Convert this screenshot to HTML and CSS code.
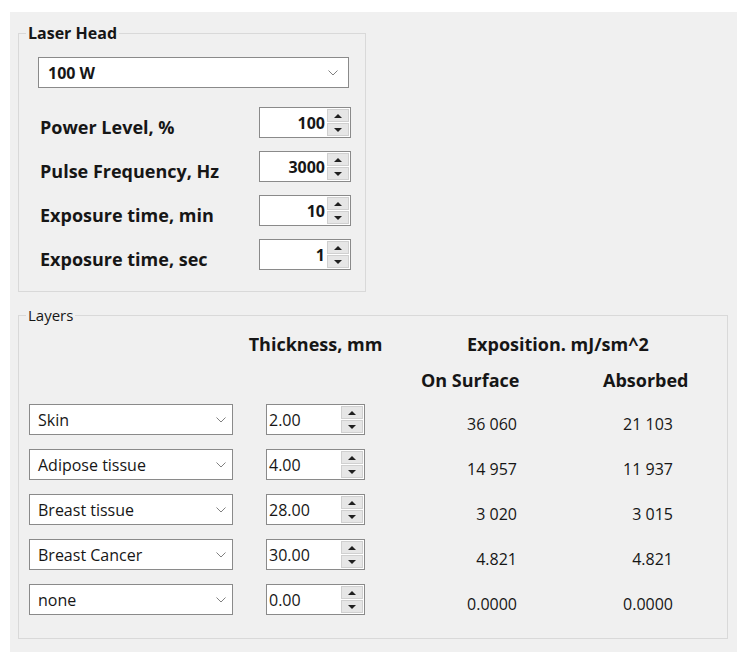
FILE: index.html
```html
<!DOCTYPE html>
<html lang="en">
<head>
    <meta charset="UTF-8">
    <title>Laser Exposure</title>
    <link rel="stylesheet" href="styles.css">
</head>
<body>
<div class="panel">
    <!-- Laser head settings -->
    <fieldset class="group laser">
        <legend>Laser Head</legend>
        <div class="laser-body">
            <div class="combo combo-head">
                <span class="combo-text">100 W</span>
                <svg class="chev" width="10" height="6" viewBox="0 0 10 6"><polyline points="0.5,0.5 5,5 9.5,0.5" fill="none" stroke="#808080" stroke-width="1"/></svg>
            </div>
            <div class="param-list">
                <div class="param">
                    <span class="param-label">Power Level, %</span>
                    <div class="spin spin-head"><span class="spin-value">100</span><div class="spin-btns"><span class="btn up"></span><span class="btn down"></span></div></div>
                </div>
                <div class="param">
                    <span class="param-label">Pulse Frequency, Hz</span>
                    <div class="spin spin-head"><span class="spin-value">3000</span><div class="spin-btns"><span class="btn up"></span><span class="btn down"></span></div></div>
                </div>
                <div class="param">
                    <span class="param-label">Exposure time, min</span>
                    <div class="spin spin-head"><span class="spin-value">10</span><div class="spin-btns"><span class="btn up"></span><span class="btn down"></span></div></div>
                </div>
                <div class="param">
                    <span class="param-label">Exposure time, sec</span>
                    <div class="spin spin-head"><span class="spin-value">1</span><div class="spin-btns"><span class="btn up"></span><span class="btn down"></span></div></div>
                </div>
            </div>
        </div>
    </fieldset>

    <!-- Tissue layers -->
    <fieldset class="group layers">
        <legend>Layers</legend>
        <div class="layer-head">
            <div></div>
            <div class="head head-thick"><span>Thickness, mm</span></div>
            <div class="head head-expo">Exposition. mJ/sm^2</div>
            <div></div>
            <div></div>
            <div class="head">On Surface</div>
            <div class="head">Absorbed</div>
        </div>
        <div class="layer-rows">
            <div class="combo combo-layer"><span class="combo-text">Skin</span><svg class="chev" width="10" height="6" viewBox="0 0 10 6"><polyline points="0.5,0.5 5,5 9.5,0.5" fill="none" stroke="#808080" stroke-width="1"/></svg></div>
            <div class="spin spin-layer"><span class="spin-value">2.00</span><div class="spin-btns"><span class="btn up"></span><span class="btn down"></span></div></div>
            <div class="val val-surf">36 060</div>
            <div class="val val-abs">21 103</div>

            <div class="combo combo-layer"><span class="combo-text">Adipose tissue</span><svg class="chev" width="10" height="6" viewBox="0 0 10 6"><polyline points="0.5,0.5 5,5 9.5,0.5" fill="none" stroke="#808080" stroke-width="1"/></svg></div>
            <div class="spin spin-layer"><span class="spin-value">4.00</span><div class="spin-btns"><span class="btn up"></span><span class="btn down"></span></div></div>
            <div class="val val-surf">14 957</div>
            <div class="val val-abs">11 937</div>

            <div class="combo combo-layer"><span class="combo-text">Breast tissue</span><svg class="chev" width="10" height="6" viewBox="0 0 10 6"><polyline points="0.5,0.5 5,5 9.5,0.5" fill="none" stroke="#808080" stroke-width="1"/></svg></div>
            <div class="spin spin-layer"><span class="spin-value">28.00</span><div class="spin-btns"><span class="btn up"></span><span class="btn down"></span></div></div>
            <div class="val val-surf">3 020</div>
            <div class="val val-abs">3 015</div>

            <div class="combo combo-layer"><span class="combo-text">Breast Cancer</span><svg class="chev" width="10" height="6" viewBox="0 0 10 6"><polyline points="0.5,0.5 5,5 9.5,0.5" fill="none" stroke="#808080" stroke-width="1"/></svg></div>
            <div class="spin spin-layer"><span class="spin-value">30.00</span><div class="spin-btns"><span class="btn up"></span><span class="btn down"></span></div></div>
            <div class="val val-surf">4.821</div>
            <div class="val val-abs">4.821</div>

            <div class="combo combo-layer"><span class="combo-text">none</span><svg class="chev" width="10" height="6" viewBox="0 0 10 6"><polyline points="0.5,0.5 5,5 9.5,0.5" fill="none" stroke="#808080" stroke-width="1"/></svg></div>
            <div class="spin spin-layer"><span class="spin-value">0.00</span><div class="spin-btns"><span class="btn up"></span><span class="btn down"></span></div></div>
            <div class="val val-surf">0.0000</div>
            <div class="val val-abs">0.0000</div>
        </div>
    </fieldset>
</div>
</body>
</html>
```

FILE: styles.css
```css
* {
    margin: 0;
    padding: 0;
    box-sizing: border-box;
}
body {
    background: #ffffff;
    font-family: 'Open Sans', 'Noto Sans', sans-serif;
    color: #161616;
}
.panel {
    margin: 12px 0 0 10px;
    width: 727px;
    height: 640px;
    background: #f0f0f0;
    padding: 12px 8px 0 8px;
}
.group {
    border: 1px solid #d9d9d9;
    padding: 0 14px 21px 7px;
}
.group legend {
    padding: 0 2px;
    font-size: 15px;
    line-height: 18px;
}
.laser {
    width: 348px;
}
.laser legend {
    font-weight: 700;
    font-size: 16px;
}
.laser-body {
    padding: 15px 0 0 12px;
}
.combo {
    display: flex;
    align-items: center;
    justify-content: space-between;
    height: 31px;
    background: #ffffff;
    border: 1px solid #8a8a8a;
    padding: 0 10px 0 9px;
}
.combo-head {
    width: 311px;
    font-weight: 700;
    font-size: 16px;
}
.param-list {
    display: flex;
    flex-direction: column;
    gap: 13px;
    margin-top: 19px;
}
.param {
    display: flex;
    align-items: center;
    justify-content: space-between;
    height: 31px;
}
.param-label {
    font-weight: 700;
    font-size: 18px;
    line-height: 21px;
    padding: 10px 0 0 2px;
}
.spin {
    display: flex;
    height: 31px;
    background: #ffffff;
    border: 1px solid #8a8a8a;
}
.spin-value {
    flex: 1;
    display: flex;
    align-items: center;
}
.spin-head {
    width: 92px;
}
.spin-head .spin-value {
    justify-content: flex-end;
    padding-right: 2px;
    font-weight: 700;
    font-size: 16px;
}
.spin-btns {
    width: 23px;
    display: flex;
    flex-direction: column;
    padding: 1px 1px 1px 0;
    gap: 1px;
}
.btn {
    flex: 1;
    background: #e6e6e6;
    border: 1px solid #d0d0d0;
    display: flex;
    align-items: center;
    justify-content: center;
}
.btn::after {
    content: '';
    border-left: 4px solid transparent;
    border-right: 4px solid transparent;
}
.btn.up::after {
    border-bottom: 4px solid #202020;
}
.btn.down::after {
    border-top: 4px solid #202020;
}
.layers {
    width: 710px;
    margin-top: 14px;
    padding-bottom: 23px;
}
.layer-head,
.layer-rows {
    display: grid;
    grid-template-columns: 237px 155px 182px 89px;
    margin-left: 3px;
}
.layer-head {
    margin-top: 8px;
    row-gap: 12px;
    margin-bottom: 12px;
}
.head {
    font-weight: 700;
    font-size: 18px;
    line-height: 24px;
    white-space: nowrap;
}
.head-thick {
    width: 99px;
    display: flex;
    justify-content: center;
}
.head-expo {
    grid-column: 3 / span 2;
    padding-left: 46px;
}
.layer-rows {
    grid-auto-rows: 31px;
    row-gap: 14px;
}
.combo-layer {
    width: 204px;
    font-size: 16px;
    padding: 0 6px 0 8px;
}
.spin-layer {
    width: 99px;
}
.spin-layer .spin-value {
    padding-left: 2px;
    font-size: 16px;
}
.val {
    font-size: 16px;
    line-height: 22px;
    text-align: right;
    padding-top: 9px;
}
.val-surf {
    width: 100px;
    padding-right: 4px;
}
.val-abs {
    padding-right: 19px;
}
```
